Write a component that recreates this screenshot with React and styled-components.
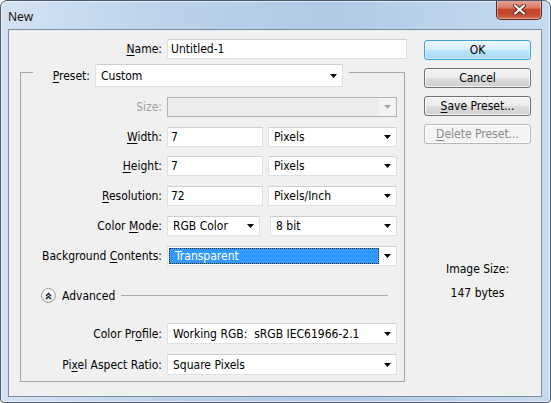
import React from 'react';
import styled, { createGlobalStyle } from 'styled-components';

const GlobalStyle = createGlobalStyle`
  html, body {
    margin: 0;
    padding: 0;
    background: #fff;
  }
  body {
    font-family: "DejaVu Sans Condensed", "Noto Sans", sans-serif;
    font-size: 12px;
    color: #000;
  }
`;

const Window = styled.div`
  width: 551px;
  height: 403px;
  box-sizing: border-box;
  display: flex;
  flex-direction: column;
  border: 1px solid #4b5a6c;
  border-radius: 7px 7px 4px 4px;
  background: linear-gradient(to right, #d3e3f4 0%, #bcd2ea 30%, #b1cae6 60%, #c6daef 100%);
  box-shadow: inset 0 0 0 1px rgba(255, 255, 255, 0.55);
  overflow: hidden;
`;

const TitleBar = styled.div`
  height: 28px;
  display: flex;
  align-items: center;
  justify-content: space-between;
  padding-left: 7px;
`;

const Title = styled.span`
  font-family: "Noto Sans", sans-serif;
  font-size: 12px;
  color: #151515;
  margin-top: 2px;
`;

const CloseButton = styled.div`
  align-self: flex-start;
  margin-top: -1px;
  margin-right: 8px;
  width: 46px;
  height: 20px;
  box-sizing: border-box;
  display: flex;
  align-items: center;
  justify-content: center;
  border: 1px solid #5b2a22;
  border-top: none;
  border-radius: 0 0 5px 5px;
  background: linear-gradient(#eaa99b 0%, #d97762 42%, #c6452c 50%, #c3472f 75%, #d46f55 100%);
  box-shadow: inset 0 0 0 1px rgba(255, 255, 255, 0.35);
`;

const Client = styled.div`
  flex: 1;
  margin: 0 8px 5px 7px;
  box-sizing: border-box;
  border: 1px solid #7d8ca0;
  background: #f0f0f0;
  display: flex;
  padding: 9px 0 0 11px;
  gap: 16px;
`;

const FormColumn = styled.div`
  width: 388px;
  display: flex;
  flex-direction: column;
`;

const Row = styled.div`
  display: flex;
  align-items: center;
  margin-top: ${(p) => p.$top || 0}px;
  margin-left: ${(p) => p.$left || 0}px;
`;

const Label = styled.label`
  width: ${(p) => p.$width || 141}px;
  margin-right: 5px;
  text-align: right;
  white-space: nowrap;
  color: ${(p) => (p.$disabled ? '#a3a3a3' : '#000')};
`;

const Key = styled.u`
  text-decoration: underline;
  text-underline-offset: 2px;
`;

const TextInput = styled.div`
  width: ${(p) => p.$width}px;
  height: 20px;
  box-sizing: border-box;
  border: 1px solid #dde1e6;
  border-top-color: #ccd0d6;
  background: #fff;
  padding-left: 3px;
  display: flex;
  align-items: center;
  line-height: 18px;
`;

const Select = styled.div`
  width: ${(p) => p.$width}px;
  height: ${(p) => p.$height || 20}px;
  box-sizing: border-box;
  display: flex;
  align-items: stretch;
  border: 1px solid ${(p) => (p.$disabled ? '#b2b2b2' : '#dde1e6')};
  border-top-color: ${(p) => (p.$disabled ? '#b2b2b2' : '#ccd0d6')};
  background: ${(p) => (p.$disabled ? '#ececec' : '#fff')};
`;

const SelectValue = styled.div`
  flex: 1;
  display: flex;
  align-items: center;
  white-space: pre;
  overflow: hidden;
  padding-left: 5px;
  margin: ${(p) => (p.$selected ? '1px 0 1px 1px' : '0')};
  background: ${(p) => (p.$selected ? '#3399ff' : 'transparent')};
  color: ${(p) => (p.$selected ? '#fff' : '#000')};
  border: ${(p) => (p.$selected ? '1px dotted #3a2a10' : 'none')};
`;

const ArrowBox = styled.div`
  width: 17px;
  display: flex;
  align-items: center;
  justify-content: center;
  background: ${(p) => (p.$disabled ? '#f3f3f3' : 'transparent')};
`;

const GroupBox = styled.fieldset`
  margin: -2px 0 0 0;
  width: 385px;
  box-sizing: border-box;
  border: 1px solid #a7a7a7;
  padding: 0 0 6px 0;
  min-width: 0;
`;

const GroupLegend = styled.legend`
  margin-left: 12px;
  padding: 7px 6px 0 0;
  display: flex;
  align-items: center;
`;

const AdvancedRow = styled.div`
  display: flex;
  align-items: center;
  margin-top: 22px;
  margin-left: 20px;
  margin-right: 16px;
  height: 15px;
`;

const RoundToggle = styled.div`
  width: 15px;
  height: 15px;
  box-sizing: border-box;
  border-radius: 50%;
  border: 1px solid #9c9c9c;
  background: linear-gradient(#ffffff, #e2e2e2);
  display: flex;
  align-items: center;
  justify-content: center;
`;

const AdvancedText = styled.span`
  margin-left: 6px;
  white-space: nowrap;
`;

const Rule = styled.div`
  flex: 1;
  margin-left: 6px;
  border-top: 1px solid #ababab;
`;

const ButtonColumn = styled.div`
  width: 107px;
  margin-top: 1px;
  display: flex;
  flex-direction: column;
  gap: 8px;
`;

const Button = styled.div`
  height: 20px;
  box-sizing: border-box;
  display: flex;
  align-items: center;
  justify-content: center;
  border-radius: 3px;
  border: 1px solid ${(p) => (p.$default ? '#36a3e0' : p.$disabled ? '#b5b9bc' : '#707070')};
  background: ${(p) =>
    p.$default
      ? 'linear-gradient(#e9f6fd 0%, #d8effc 50%, #bde5fc 51%, #a6d8f4 100%)'
      : p.$disabled
      ? '#f4f4f4'
      : 'linear-gradient(#f3f3f3 0%, #ebebeb 50%, #dddddd 51%, #cfcfcf 100%)'};
  box-shadow: inset 0 0 0 1px rgba(255, 255, 255, ${(p) => (p.$default ? 0.5 : 0.8)});
  color: ${(p) => (p.$disabled ? '#8a8a8a' : '#000')};
`;

const Info = styled.div`
  margin-top: 105px;
  text-align: center;
  line-height: 24px;
  color: #000;
`;

const Arrow = ({ disabled }) => (
  <svg width="7" height="4" viewBox="0 0 7 4">
    <path d="M0 0H7L3.5 4Z" fill={disabled ? '#a8a8a8' : '#000'} />
  </svg>
);

const Dropdown = ({ width, height, value, selected, disabled }) => (
  <Select $width={width} $height={height} $disabled={disabled}>
    <SelectValue $selected={selected}>{value}</SelectValue>
    <ArrowBox $disabled={disabled}>
      <Arrow disabled={disabled} />
    </ArrowBox>
  </Select>
);

const CloseGlyph = () => (
  <svg width="13" height="11" viewBox="0 0 13 11">
    <path d="M2 1.5L11 9.5M11 1.5L2 9.5" stroke="#5a2019" strokeWidth="4" strokeLinecap="round" />
    <path d="M2 1.5L11 9.5M11 1.5L2 9.5" stroke="#fff" strokeWidth="2.2" strokeLinecap="round" />
  </svg>
);

const Chevrons = () => (
  <svg width="7" height="8" viewBox="0 0 7 8">
    <path d="M1 4L3.5 1.5L6 4M1 7L3.5 4.5L6 7" fill="none" stroke="#1a1a1a" strokeWidth="1.3" />
  </svg>
);

const App = () => (
  <>
    <GlobalStyle />
    <Window>
      <TitleBar>
        <Title>New</Title>
        <CloseButton>
          <CloseGlyph />
        </CloseButton>
      </TitleBar>
      <Client>
        <FormColumn>
          <Row>
            <Label $width={142}>
              <Key>N</Key>ame:
            </Label>
            <TextInput $width={240}>Untitled-1</TextInput>
          </Row>

          <GroupBox>
            <GroupLegend>
              <Label $width={57}>
                <Key>P</Key>reset:
              </Label>
              <Dropdown width={248} height={23} value="Custom" />
            </GroupLegend>

            <Row $top={10}>
              <Label $disabled>Size:</Label>
              <Dropdown width={230} value="" disabled />
            </Row>
            <Row $top={10}>
              <Label>
                <Key>W</Key>idth:
              </Label>
              <TextInput $width={96}>7</TextInput>
              <Row $left={5}>
                <Dropdown width={129} value="Pixels" />
              </Row>
            </Row>
            <Row $top={9}>
              <Label>
                <Key>H</Key>eight:
              </Label>
              <TextInput $width={96}>7</TextInput>
              <Row $left={5}>
                <Dropdown width={129} value="Pixels" />
              </Row>
            </Row>
            <Row $top={10}>
              <Label>
                <Key>R</Key>esolution:
              </Label>
              <TextInput $width={96}>72</TextInput>
              <Row $left={5}>
                <Dropdown width={129} value="Pixels/Inch" />
              </Row>
            </Row>
            <Row $top={10}>
              <Label>
                Color <Key>M</Key>ode:
              </Label>
              <Dropdown width={93} value="RGB Color" />
              <Row $left={10}>
                <Dropdown width={127} value="8 bit" />
              </Row>
            </Row>
            <Row $top={10}>
              <Label>
                Background <Key>C</Key>ontents:
              </Label>
              <Dropdown width={230} value="Transparent" selected />
            </Row>

            <AdvancedRow>
              <RoundToggle>
                <Chevrons />
              </RoundToggle>
              <AdvancedText>Advanced</AdvancedText>
              <Rule />
            </AdvancedRow>

            <Row $top={20}>
              <Label>
                Color Pr<Key>o</Key>file:
              </Label>
              <Dropdown width={230} height={21} value="Working RGB:  sRGB IEC61966-2.1" />
            </Row>
            <Row $top={10}>
              <Label>
                Pi<Key>x</Key>el Aspect Ratio:
              </Label>
              <Dropdown width={230} height={21} value="Square Pixels" />
            </Row>
          </GroupBox>
        </FormColumn>

        <ButtonColumn>
          <Button $default>OK</Button>
          <Button>Cancel</Button>
          <Button>
            <span>
              <Key>S</Key>ave Preset...
            </span>
          </Button>
          <Button $disabled>
            <span>
              <Key>D</Key>elete Preset...
            </span>
          </Button>
          <Info>
            <div>Image Size:</div>
            <div>147 bytes</div>
          </Info>
        </ButtonColumn>
      </Client>
    </Window>
  </>
);

export default App;
